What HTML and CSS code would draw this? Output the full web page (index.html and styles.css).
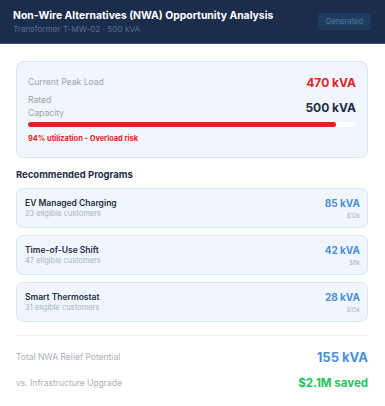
FILE: index.html
```html
<!DOCTYPE html>
<html lang="en">
<head>
    <meta charset="UTF-8">
    <title>NWA Opportunity Analysis</title>
    <meta name="viewport" content="width=device-width, initial-scale=1.0">
    <link rel="stylesheet" href="styles.css">
</head>
<body>

<div class="header">
    <div class="titles">
        <div class="title">Non-Wire Alternatives (NWA) Opportunity Analysis</div>
        <div class="subtitle">Transformer T-MW-02 · 500 kVA</div>
    </div>
    <div class="badge">Generated</div>
</div>

<div class="content">
    <div class="load-card">
        <div class="row">
            <div class="label">Current Peak Load</div>
            <div class="value red">470 kVA</div>
        </div>
        <div class="row">
            <div class="label narrow">Rated Capacity</div>
            <div class="value">500 kVA</div>
        </div>
        <div class="bar">
            <div class="bar-fill" style="width: 94%"></div>
        </div>
        <div class="warning">94% utilization - Overload risk</div>
    </div>

    <h2>Recommended Programs</h2>

    <div class="programs">
        <div class="program">
            <div>
                <div class="program-name">EV Managed Charging</div>
                <div class="program-sub">23 eligible customers</div>
            </div>
            <div class="program-right">
                <div class="program-kva">85 kVA</div>
                <div class="program-cost">$12k</div>
            </div>
        </div>
        <div class="program">
            <div>
                <div class="program-name">Time-of-Use Shift</div>
                <div class="program-sub">47 eligible customers</div>
            </div>
            <div class="program-right">
                <div class="program-kva">42 kVA</div>
                <div class="program-cost">$8k</div>
            </div>
        </div>
        <div class="program">
            <div>
                <div class="program-name">Smart Thermostat</div>
                <div class="program-sub">31 eligible customers</div>
            </div>
            <div class="program-right">
                <div class="program-kva">28 kVA</div>
                <div class="program-cost">$15k</div>
            </div>
        </div>
    </div>

    <div class="summary">
        <div class="summary-row">
            <div class="summary-label">Total NWA Relief Potential</div>
            <div class="summary-value blue">155 kVA</div>
        </div>
        <div class="summary-row">
            <div class="summary-label">vs. Infrastructure Upgrade</div>
            <div class="summary-value green">$2.1M saved</div>
        </div>
    </div>
</div>

</body>
</html>
```

FILE: styles.css
```css
:root {
    --navy: #1b2d4c;
    --texto: #1f2d45;
    --cinza: #9ca3ad;
    --cinza-claro: #a9b1bb;
    --azul: #4a90d9;
    --vermelho: #dc2626;
    --verde: #22c55e;
    --card: #f0f6fc;
    --borda: #d9e7f5;
}

body {
    font-family: Inter, 'Noto Sans', sans-serif;
    background-color: #fff;
    margin: 0;
    padding: 0;
}

.header {
    background-color: var(--navy);
    border-bottom: 1px solid #3b4d6b;
    height: 43px;
    padding: 0 14px 0 13px;
    display: flex;
    justify-content: space-between;
    align-items: center;
}

.title {
    color: #fff;
    font-size: 10.4px;
    font-weight: 700;
    line-height: 14px;
}

.subtitle {
    color: #566e90;
    font-size: 8.2px;
    line-height: 11px;
    margin-top: 1px;
}

.badge {
    background-color: #203b5e;
    color: #4f7fae;
    font-size: 7.5px;
    padding: 4px 8px;
    border-radius: 3px;
}

.content {
    padding: 17px 17px 0 16px;
}

.load-card {
    background-color: var(--card);
    border: 1px solid var(--borda);
    border-radius: 8px;
    padding: 14px 11px 13px 11px;
}

.row {
    display: flex;
    justify-content: space-between;
    align-items: center;
    margin-bottom: 5px;
}

.row + .row {
    margin-bottom: 2px;
}

.label {
    color: var(--cinza);
    font-size: 8.6px;
    line-height: 13px;
}

.label.narrow {
    width: 40px;
}

.value {
    color: var(--texto);
    font-size: 12px;
    font-weight: 700;
    line-height: 13px;
}

.red {
    color: var(--vermelho);
}

.bar {
    height: 5px;
    background-color: #fff;
    border-radius: 3px;
}

.bar-fill {
    height: 100%;
    background-color: var(--vermelho);
    border-radius: 3px;
}

.warning {
    color: var(--vermelho);
    font-size: 7.4px;
    font-weight: 700;
    line-height: 10px;
    margin-top: 7px;
}

h2 {
    color: var(--texto);
    font-size: 9.5px;
    font-weight: 700;
    margin: 11px 0 8px 0;
}

.programs {
    display: flex;
    flex-direction: column;
    gap: 7px;
}

.program {
    background-color: var(--card);
    border: 1px solid var(--borda);
    border-radius: 7px;
    height: 38px;
    padding: 0 7px 0 8px;
    display: flex;
    justify-content: space-between;
    align-items: center;
}

.program-name {
    color: var(--texto);
    font-size: 8.5px;
    font-weight: 600;
}

.program-sub {
    color: var(--cinza-claro);
    font-size: 7.5px;
    margin-top: 1px;
}

.program-right {
    text-align: right;
}

.program-kva {
    color: var(--azul);
    font-size: 10px;
    font-weight: 700;
}

.program-cost {
    color: var(--cinza-claro);
    font-size: 6px;
    margin-top: 3px;
}

.summary {
    border-top: 1px solid #eef1f4;
    margin-top: 13px;
    padding-top: 8px;
}

.summary-row {
    display: flex;
    justify-content: space-between;
    align-items: center;
    height: 26px;
}

.summary-label {
    color: var(--cinza-claro);
    font-size: 8.5px;
}

.summary-value {
    font-size: 13px;
    font-weight: 700;
}

.blue {
    color: var(--azul);
}

.green {
    color: var(--verde);
    font-size: 11.5px;
}
```
